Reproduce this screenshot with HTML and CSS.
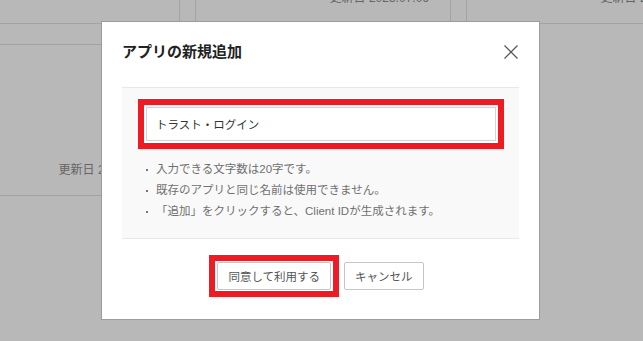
FILE: index.html
```html
<!DOCTYPE html>
<html lang="ja">
<head>
    <meta charset="UTF-8">
    <meta name="viewport" content="width=device-width, initial-scale=1.0">
    <title>アプリの新規追加</title>
    <link rel="stylesheet" href="styles.css">
</head>
<body>

    <!-- pagina de fondo: tarjetas de apps -->
    <div class="cards">
        <div class="card"></div>
        <div class="card"><p class="fecha">更新日 2023.07.06</p></div>
        <div class="card"><p class="fecha">更新日 2023.07.06</p></div>
        <div class="card"><p class="fecha">更新日 2023.07.06</p></div>
        <div class="card"><p class="fecha">更新日 2023.07.06</p></div>
    </div>

    <div class="overlay"></div>

    <div class="modal">
        <div class="modal-header">
            <h2 class="modal-titulo">アプリの新規追加</h2>
            <svg class="cerrar" width="14" height="14" viewBox="0 0 14 14">
                <path d="M0.5 0.5 L13.5 13.5 M13.5 0.5 L0.5 13.5" stroke="#555" stroke-width="1.2" fill="none"/>
            </svg>
        </div>

        <div class="panel">
            <div class="marca">
                <input class="campo" type="text" value="トラスト・ログイン">
            </div>
            <ul class="notas">
                <li>入力できる文字数は20字です。</li>
                <li>既存のアプリと同じ名前は使用できません。</li>
                <li>「追加」をクリックすると、Client IDが生成されます。</li>
            </ul>
        </div>

        <div class="botones">
            <button class="boton marcado">同意して利用する</button>
            <button class="boton">キャンセル</button>
        </div>
    </div>

</body>
</html>
```

FILE: styles.css
```css
body{
    margin: 0;
    background: #fff;
    font-family: 'Liberation Sans', 'Noto Sans CJK JP', sans-serif;
    overflow: hidden;
    height: 341px;
}
.cards{
    display: grid;
    grid-template-columns: repeat(3, 256px);
    column-gap: 15px;
    row-gap: 20px;
    margin: -128px 0 0 -76px;
}
.card{
    box-sizing: border-box;
    height: 152px;
    border: 1px solid #e2e2e2;
    background: #fff;
    display: flex;
    align-items: flex-end;
    justify-content: flex-end;
}
.fecha{
    margin: 0 21px 17px 0;
    font-size: 12px;
    line-height: 16px;
    color: #8c8c8c;
    white-space: nowrap;
}
.overlay{
    position: fixed;
    inset: 0;
    background: rgba(0, 0, 0, 0.28);
}
.modal{
    position: absolute;
    left: 101px;
    top: 21px;
    width: 439px;
    height: 299px;
    box-sizing: border-box;
    border: 1px solid #9c9c9c;
    background: #fff;
    padding: 0 20px;
}
.modal-header{
    display: flex;
    align-items: center;
    justify-content: space-between;
    margin-top: 19px;
    height: 22px;
}
.modal-titulo{
    margin: 0;
    font-size: 15px;
    line-height: 22px;
    font-weight: bold;
    color: #222;
}
.cerrar{
    margin-right: 1px;
}
.panel{
    margin-top: 24px;
    background: #f9f9f9;
    border-top: 1px solid #e8e8e8;
    border-bottom: 1px solid #e8e8e8;
    padding: 11px 15px 16px 16px;
}
.marca{
    border: 6px solid #ed1c24;
    padding: 2px;
    background: #fff;
}
.campo{
    display: block;
    box-sizing: border-box;
    width: 100%;
    height: 34px;
    margin: 0;
    border: 1px solid #d4d4d4;
    padding: 0 9px;
    font-family: 'Liberation Sans', 'Noto Sans CJK JP', sans-serif;
    font-size: 11.5px;
    color: #333;
    background: #fff;
    outline: none;
}
.notas{
    list-style: none;
    margin: 10px 0 0 0;
    padding: 0 0 0 18px;
    font-size: 11.5px;
    line-height: 21px;
    color: #707070;
}
.notas li{
    position: relative;
}
.notas li::before{
    content: '';
    position: absolute;
    left: -10px;
    top: 10px;
    width: 2px;
    height: 2px;
    background: #777;
}
.botones{
    display: flex;
    justify-content: center;
    gap: 13px;
    margin-top: 23px;
}
.boton{
    height: 28px;
    padding: 0 10px;
    border: 1px solid #c6c6c6;
    border-radius: 2px;
    background: #fff;
    font-family: 'Liberation Sans', 'Noto Sans CJK JP', sans-serif;
    font-size: 11.5px;
    color: #555;
}
.marcado{
    position: relative;
}
.marcado::before{
    content: '';
    position: absolute;
    left: -9px;
    right: -9px;
    top: -8px;
    bottom: -8px;
    border: 6px solid #ed1c24;
}
```
